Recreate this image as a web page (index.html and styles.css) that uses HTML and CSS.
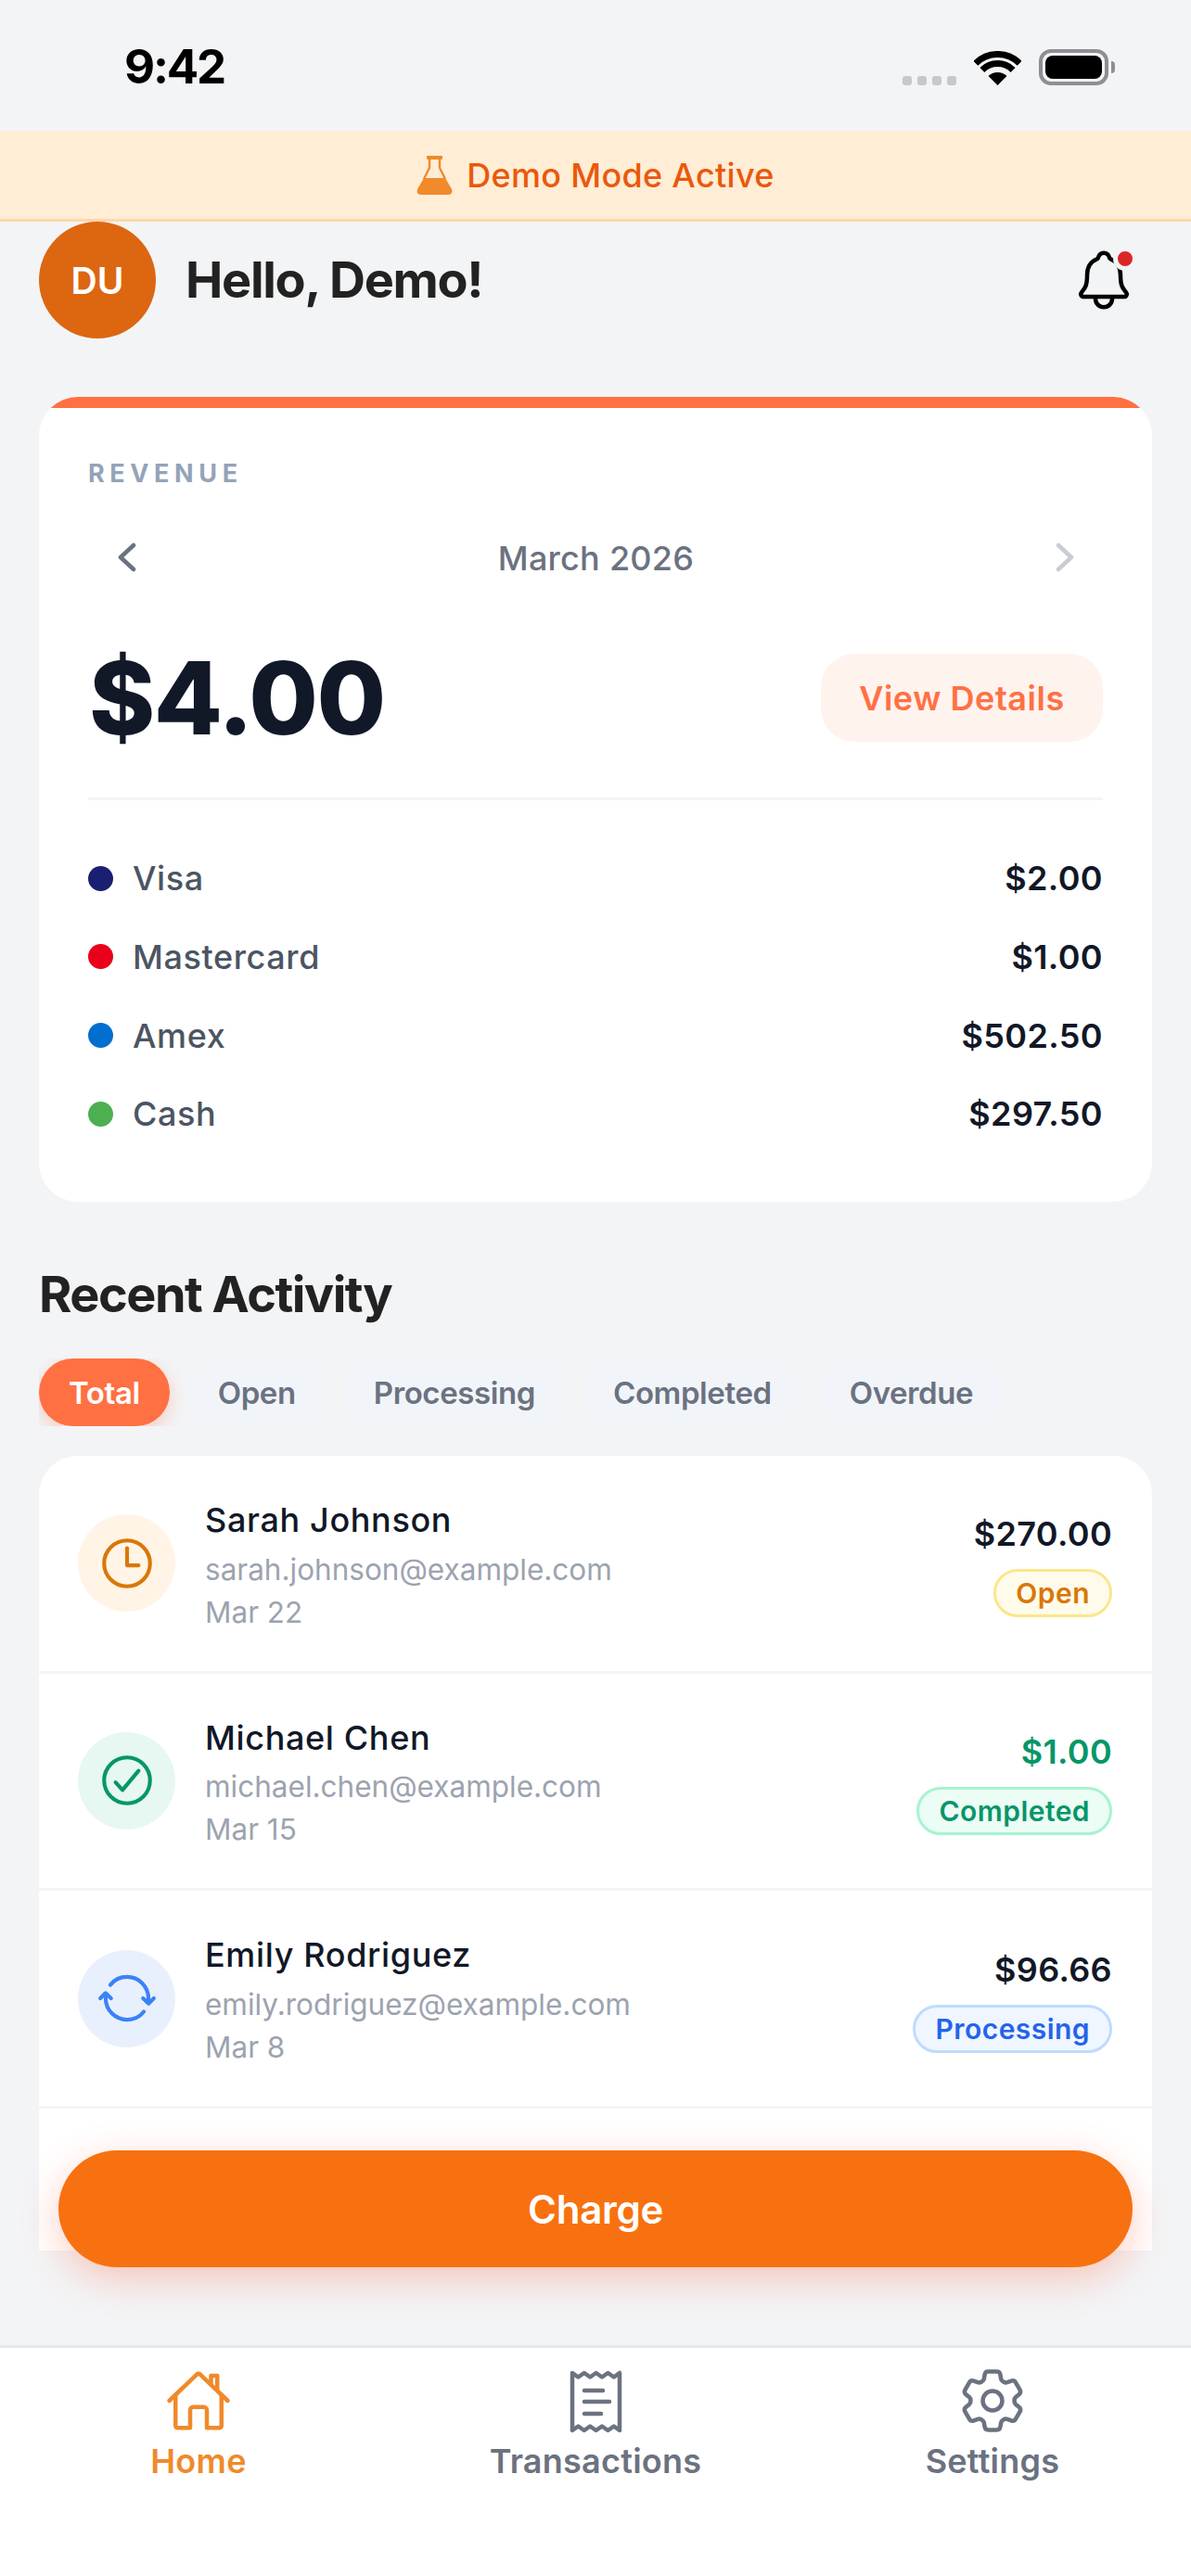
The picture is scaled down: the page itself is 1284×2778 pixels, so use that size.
FILE: index.html
```html
<!DOCTYPE html>
<html lang="en">
<head>
<meta charset="utf-8">
<title>Home</title>
<link rel="stylesheet" href="styles.css">
</head>
<body>
<div class="app">
  <div class="status">
    <span class="time">9:42</span>
    <div class="status-icons">
      <div class="signal"><i></i><i></i><i></i><i></i></div>
      <svg class="wifi" width="51" height="37" viewBox="0 0 51 37"><path d="M25.5 37L15.6 27.1A14 14 0 0 1 35.4 27.1Z" fill="#000"/><path d="M8.9 20.4A23.5 23.5 0 0 1 42.1 20.4M1.8 13.3A33.5 33.5 0 0 1 49.2 13.3" fill="none" stroke="#000" stroke-width="7"/></svg>
      <div class="battery"><div class="battery-fill"></div></div>
      <div class="battery-tip"></div>
    </div>
  </div>
  <div class="banner">
    <svg class="flask" width="39" height="42" viewBox="0 0 39 42"><rect x="11" y="0" width="17" height="4" rx="1" fill="#f08a2a"/><path d="M14 4V13L8 25M25 4V13L31 25" fill="none" stroke="#f08a2a" stroke-width="2.4"/><path d="M8 24H31L38 36Q39.500 42 34 42H5Q-.5 42 1 36Z" fill="#f08a2a"/></svg>
    <span>Demo Mode Active</span>
  </div>
  <main class="main">
    <div class="scroll">
      <header class="header">
        <div class="greeting">
          <div class="avatar">DU</div>
          <h1 class="hello">Hello, Demo!</h1>
        </div>
        <div class="bell">
          <svg width="72" height="72" viewBox="0 0 512 512" fill="none" stroke="#000" stroke-width="32" stroke-linecap="round" stroke-linejoin="round"><path d="M427.68 351.43C402 320 383.87 304 383.87 217.35 383.87 138 343.35 109.73 310 96c-4.43-1.82-8.6-6-9.95-10.55C294.2 65.54 277.8 48 256 48s-38.19 17.55-44 37.47c-1.35 4.6-5.52 8.71-9.95 10.53-33.39 13.75-73.87 41.92-73.87 121.35C128.13 304 110 320 84.32 351.43 73.68 364.45 83 384 101.61 384h308.88c18.51 0 27.77-19.61 17.19-32.57zM320 384v16a64 64 0 01-128 0v-16"/></svg>
          <span class="bell-dot"></span>
        </div>
      </header>

      <section class="revenue">
        <div class="rev-bar"></div>
        <div class="rev-body">
          <div class="rev-label">REVENUE</div>
          <div class="month-nav">
            <svg width="20" height="32" viewBox="0 0 20 32" fill="none" stroke="#6b7280" stroke-width="4.500" stroke-linecap="round" stroke-linejoin="round"><path d="M17 3L3 16L17 29"/></svg>
            <span class="month">March 2026</span>
            <svg width="20" height="32" viewBox="0 0 20 32" fill="none" stroke="#c9ccd1" stroke-width="4.500" stroke-linecap="round" stroke-linejoin="round"><path d="M3 3L17 16L3 29"/></svg>
          </div>
          <div class="amount-row">
            <div class="amount">$4.00</div>
            <div class="details">View Details</div>
          </div>
          <div class="rule"></div>
          <ul class="legend">
            <li class="legend-row"><span class="legend-name"><i class="dot dot-visa"></i>Visa</span><span class="legend-val">$2.00</span></li>
            <li class="legend-row"><span class="legend-name"><i class="dot dot-mc"></i>Mastercard</span><span class="legend-val">$1.00</span></li>
            <li class="legend-row"><span class="legend-name"><i class="dot dot-amex"></i>Amex</span><span class="legend-val">$502.50</span></li>
            <li class="legend-row"><span class="legend-name"><i class="dot dot-cash"></i>Cash</span><span class="legend-val">$297.50</span></li>
          </ul>
        </div>
      </section>

      <h2 class="section-title">Recent Activity</h2>
      <div class="tabs">
        <span class="tab tab-active">Total</span>
        <span class="tab">Open</span>
        <span class="tab">Processing</span>
        <span class="tab">Completed</span>
        <span class="tab">Overdue</span>
      </div>

      <div class="list">
        <div class="row">
          <div class="row-icon icon-open">
            <svg width="66" height="66" viewBox="0 0 512 512" fill="none" stroke="#d97706" stroke-width="32" stroke-linecap="round" stroke-linejoin="round"><path d="M256 64C150 64 64 150 64 256s86 192 192 192 192-86 192-192S362 64 256 64z"/><path d="M256 128v144h96"/></svg>
          </div>
          <div class="row-text">
            <div class="name">Sarah Johnson</div>
            <div class="email">sarah.johnson@example.com</div>
            <div class="date">Mar 22</div>
          </div>
          <div class="row-right">
            <div class="price">$270.00</div>
            <span class="badge badge-open">Open</span>
          </div>
        </div>
        <div class="row">
          <div class="row-icon icon-done">
            <svg width="66" height="66" viewBox="0 0 512 512" fill="none" stroke="#059669" stroke-width="32" stroke-linecap="round" stroke-linejoin="round"><path d="M448 256c0-106-86-192-192-192S64 150 64 256s86 192 192 192 192-86 192-192z"/><path d="M352 176L217.600 336 160 272"/></svg>
          </div>
          <div class="row-text">
            <div class="name">Michael Chen</div>
            <div class="email">michael.chen@example.com</div>
            <div class="date">Mar 15</div>
          </div>
          <div class="row-right">
            <div class="price price-done">$1.00</div>
            <span class="badge badge-done">Completed</span>
          </div>
        </div>
        <div class="row">
          <div class="row-icon icon-proc">
            <svg width="66" height="66" viewBox="0 0 512 512" fill="none" stroke="#3b82f6" stroke-width="32" stroke-linecap="round" stroke-linejoin="round"><path d="M434.670 285.590v-29.800c0-98.730-80.240-178.790-179.200-178.790a179 179 0 00-140.140 67.360m-38.530 82v29.800C76.800 355 157 435 256 435a180.450 180.450 0 00140-66.920"/><path d="M32 256l44-44 46 44"/><path d="M480 256l-44 44-46-44"/></svg>
          </div>
          <div class="row-text">
            <div class="name">Emily Rodriguez</div>
            <div class="email">emily.rodriguez@example.com</div>
            <div class="date">Mar 8</div>
          </div>
          <div class="row-right">
            <div class="price">$96.66</div>
            <span class="badge badge-proc">Processing</span>
          </div>
        </div>
        <div class="row"></div>
      </div>
    </div>
    <div class="charge">Charge</div>
  </main>
  <nav class="tabbar">
    <div class="nav-item nav-active">
      <svg width="72" height="72" viewBox="0 0 512 512" fill="none" stroke="#f08a2a" stroke-width="32" stroke-linecap="round" stroke-linejoin="round"><path d="M80 212v236a16 16 0 0016 16h96V328a24 24 0 0124-24h80a24 24 0 0124 24v136h96a16 16 0 0016-16V212"/><path d="M480 256L266.890 52c-5-5.280-16.690-5.340-21.780 0L32 256M400 179V64h-48v69"/></svg>
      <span>Home</span>
    </div>
    <div class="nav-item">
      <svg width="72" height="72" viewBox="0 0 72 72" fill="none" stroke="#6b7280" stroke-width="4.500" stroke-linecap="round" stroke-linejoin="round"><path d="M11 6L17.400 10.500L23.800 6L30.200 10.500L36.600 6L43 10.500L49.400 6L55.800 10.500L62 6V68L55.800 63.500L49.400 68L43 63.500L36.600 68L30.200 63.500L23.800 68L17.400 63.500L11 68Z"/><path d="M24 25H44M24 37H51M24 50H42"/></svg>
      <span>Transactions</span>
    </div>
    <div class="nav-item">
      <svg width="72" height="72" viewBox="1.700 1.700 20.600 20.600" fill="none" stroke="#6b7280" stroke-width="1.300" stroke-linecap="round" stroke-linejoin="round"><path d="M9.594 3.940c.09-.542.56-.94 1.110-.94h2.593c.55 0 1.020.398 1.110.94l.213 1.281c.063.374.313.686.645.870.074.04.147.083.22.127.325.196.72.257 1.075.124l1.217-.456a1.125 1.125 0 0 1 1.370.49l1.296 2.247a1.125 1.125 0 0 1-.26 1.431l-1.003.827c-.293.241-.438.613-.43.992a7.723 7.723 0 0 1 0 .255c-.008.378.137.75.43.991l1.004.827c.424.35.534.955.26 1.430l-1.298 2.247a1.125 1.125 0 0 1-1.369.491l-1.217-.456c-.355-.133-.75-.072-1.076.124a6.470 6.470 0 0 1-.22.128c-.331.183-.581.495-.644.869l-.213 1.281c-.09.543-.56.94-1.110.94h-2.594c-.55 0-1.019-.398-1.110-.94l-.213-1.281c-.062-.374-.312-.686-.644-.870a6.520 6.520 0 0 1-.22-.127c-.325-.196-.72-.257-1.076-.124l-1.217.456a1.125 1.125 0 0 1-1.369-.49l-1.297-2.247a1.125 1.125 0 0 1 .26-1.431l1.004-.827c.292-.24.437-.613.43-.991a6.932 6.932 0 0 1 0-.255c.007-.38-.138-.751-.43-.992l-1.004-.827a1.125 1.125 0 0 1-.26-1.430l1.297-2.247a1.125 1.125 0 0 1 1.370-.491l1.216.456c.356.133.751.072 1.076-.124.072-.044.146-.086.22-.128.332-.183.582-.495.644-.869l.214-1.280Z"/><path d="M15 12a3 3 0 1 1-6 0 3 3 0 0 1 6 0Z"/></svg>
      <span>Settings</span>
    </div>
  </nav>
</div>
</body>
</html>
```
FILE: styles.css
```css
* { box-sizing: border-box; }
html, body { margin: 0; padding: 0; }
body { font-family: Inter, "Noto Sans", sans-serif; background: #f3f4f6; color: #111827; }
ul { list-style: none; margin: 0; padding: 0; }
h1, h2 { margin: 0; }

.app { width: 1284px; height: 2778px; display: flex; flex-direction: column; overflow: hidden; background: #f3f4f6; }

.status { height: 141px; flex: none; display: flex; justify-content: space-between; padding: 41px 82px 0 134px; align-items: flex-start; }
.time { font-size: 51px; font-weight: 700; line-height: 62px; color: #000; letter-spacing: -2.2px; }
.status-icons { display: flex; align-items: flex-end; padding-top: 12px; }
.signal { display: flex; gap: 6px; margin-right: 19px; }
.signal i { width: 10px; height: 10px; border-radius: 3px; background: #c7c7cc; }
.wifi { margin-right: 19px; display: block; }
.battery { width: 75px; height: 39px; border: 4px solid #8e8e93; border-radius: 13px; padding: 3px; }
.battery-fill { height: 100%; background: #000; border-radius: 8px; }
.battery-tip { width: 4px; height: 13px; margin: 0 0 13px 3px; background: #8e8e93; border-radius: 0 4px 4px 0; }

.banner { height: 98px; flex: none; background: #ffedd5; border-bottom: 3px solid #fed7aa; display: flex; align-items: center; justify-content: center; gap: 15px; font-size: 36px; font-weight: 500; letter-spacing: .3px; color: #ea580c; }
.flask { display: block; }

.main { flex: 1; position: relative; min-height: 0; }
.scroll { height: 2188px; overflow: hidden; padding: 0 42px; }

.header { height: 126px; display: flex; align-items: center; justify-content: space-between; margin-bottom: 63px; padding-right: 16px; }
.greeting { display: flex; align-items: center; gap: 32px; }
.avatar { width: 126px; height: 126px; border-radius: 50%; background: #dd6611; color: #fff; display: flex; align-items: center; justify-content: center; font-size: 39px; font-weight: 600; }
.hello { font-size: 54px; font-weight: 700; line-height: 66px; color: #222; letter-spacing: -1.3px; }
.bell { position: relative; width: 72px; height: 72px; }
.bell svg { display: block; }
.bell-dot { position: absolute; top: 0; right: 0; width: 26px; height: 26px; border-radius: 50%; background: #dc2626; border: 5.5px solid #f3f4f6; }

.revenue { background: #fff; border-radius: 42px; height: 868px; overflow: hidden; }
.rev-bar { height: 12px; background: #ff7043; }
.rev-body { padding: 50px 53px 52px; }
.rev-label { font-size: 27px; line-height: 42px; font-weight: 700; letter-spacing: 5.6px; color: #94a3b8; }
.month-nav { height: 84px; margin-top: 27px; display: flex; align-items: center; justify-content: space-between; padding: 0 31px 0 32px; }
.month { font-size: 36px; font-weight: 500; letter-spacing: .25px; line-height: 46px; padding-top: 2px; color: #6b7280; }
.amount-row { display: flex; align-items: center; justify-content: space-between; height: 95px; margin-top: 62px; }
.amount { font-size: 108px; font-weight: 800; line-height: 95px; color: #111827; letter-spacing: -1.5px; padding-left: 1px; }
.details { width: 304px; height: 95px; border-radius: 36px; background: #fff3ee; color: #ff7043; font-size: 36px; font-weight: 600; letter-spacing: .55px; display: flex; align-items: center; justify-content: center; }
.rule { height: 3px; background: #f3f4f6; margin-top: 60px; }
.legend { margin-top: 42px; }
.legend-row { height: 84.67px; display: flex; align-items: center; justify-content: space-between; }
.legend-name { display: flex; align-items: center; gap: 21px; font-size: 36px; font-weight: 500; letter-spacing: .6px; color: #4b5563; }
.legend-val { font-size: 36px; font-weight: 600; letter-spacing: .4px; color: #111827; }
.dot { width: 27px; height: 27px; border-radius: 50%; }
.dot-visa { background: #1a1f71; }
.dot-mc { background: #eb001b; }
.dot-amex { background: #016fd0; }
.dot-cash { background: #4caf50; }

.section-title { font-size: 54px; font-weight: 700; line-height: 66px; margin-top: 67px; color: #222; letter-spacing: -1.5px; }
.tabs { display: flex; gap: 20px; height: 73px; margin-top: 36px; overflow: hidden; padding-right: 20px; }
.tab { height: 73px; padding: 0 32px; border-radius: 37px; background: #f1f5f9; color: #6b7280; font-size: 33px; font-weight: 600; letter-spacing: -.4px; display: flex; align-items: center; }
.tab-active { background: #ff7043; color: #fff; box-shadow: 0 6px 18px rgba(255,112,67,.3); }

.list { margin-top: 32px; background: #fff; border-radius: 42px 42px 0 0; }
.row { height: 234.67px; border-bottom: 3px solid #f3f4f6; padding: 0 43px 0 42px; display: flex; align-items: center; gap: 32px; }
.row-icon { width: 105px; height: 105px; border-radius: 50%; flex: none; display: flex; align-items: center; justify-content: center; }
.icon-open { background: #fff4e6; }
.icon-done { background: #e7f7f1; }
.icon-proc { background: #e9f0fd; }
.row-text { flex: 1; min-width: 0; padding-top: 5px; }
.name { font-size: 36px; font-weight: 500; letter-spacing: .65px; line-height: 45px; color: #111827; }
.email { font-size: 31.5px; line-height: 42px; margin-top: 9.5px; color: #9ca3af; }
.date { font-size: 31.5px; line-height: 42px; margin-top: 4px; color: #9ca3af; }
.row-right { display: flex; flex-direction: column; align-items: flex-end; padding-top: 3px; }
.price { font-size: 36px; font-weight: 600; letter-spacing: .35px; line-height: 48px; color: #111827; }
.price-done { color: #059669; }
.badge { height: 52px; margin-top: 14px; padding: 0 21px; border-radius: 26px; border: 3px solid; font-size: 30px; font-weight: 600; letter-spacing: .45px; display: flex; align-items: center; }
.badge-open { color: #d97706; background: #fffbeb; border-color: #fde68a; }
.badge-done { color: #059669; background: #ecfdf5; border-color: #a7f3d0; }
.badge-proc { color: #2563eb; background: #eff6ff; border-color: #bfdbfe; }

.charge { position: absolute; left: 63px; right: 63px; bottom: 84px; height: 126px; border-radius: 63px; background: #f87110; color: #fff; font-size: 42px; font-weight: 600; letter-spacing: -.3px; display: flex; align-items: center; justify-content: center; box-shadow: 0 12px 42px rgba(255,90,50,.3); }

.tabbar { height: 249px; flex: none; background: #fff; border-top: 3px solid #e5e7eb; display: grid; grid-template-columns: repeat(3, 1fr); padding-top: 21px; }
.nav-item { display: flex; flex-direction: column; align-items: center; font-size: 36px; font-weight: 600; letter-spacing: .25px; line-height: 44px; color: #6b7280; }
.nav-item svg { display: block; margin-bottom: 7px; }
.nav-active { color: #f08a2a; }
```
